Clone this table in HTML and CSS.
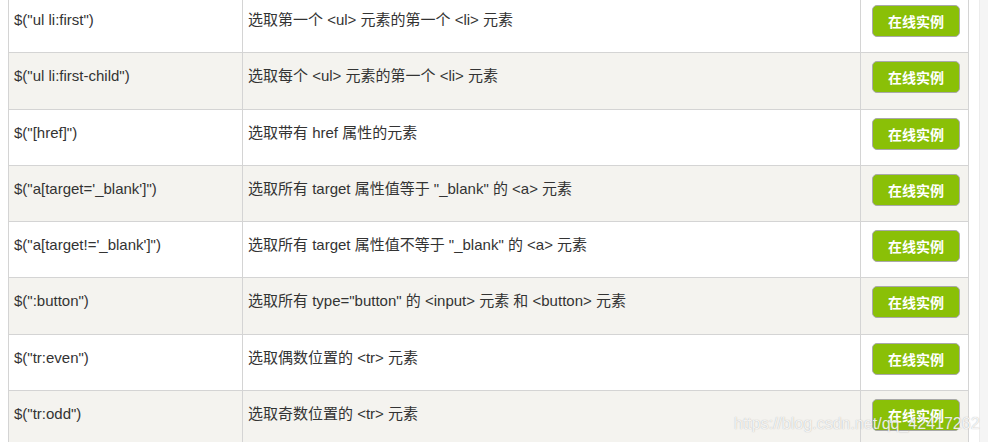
FILE: index.html
```html
<!DOCTYPE html>
<html lang="zh-CN">
<head>
<meta charset="utf-8">
<title>jQuery 选择器</title>
<link rel="stylesheet" href="styles.css">
</head>
<body>
<div class="page">
  <main class="content">
    <table class="reference">
      <colgroup>
        <col class="c-sel">
        <col class="c-desc">
        <col class="c-try">
      </colgroup>
      <tbody>
        <tr><td>$("ul li:first")</td><td>选取第一个 &lt;ul&gt; 元素的第一个 &lt;li&gt; 元素</td><td class="try"><a class="tryit" href="#">在线实例</a></td></tr>
        <tr><td>$("ul li:first-child")</td><td>选取每个 &lt;ul&gt; 元素的第一个 &lt;li&gt; 元素</td><td class="try"><a class="tryit" href="#">在线实例</a></td></tr>
        <tr><td>$("[href]")</td><td>选取带有 href 属性的元素</td><td class="try"><a class="tryit" href="#">在线实例</a></td></tr>
        <tr><td>$("a[target='_blank']")</td><td>选取所有 target 属性值等于 "_blank" 的 &lt;a&gt; 元素</td><td class="try"><a class="tryit" href="#">在线实例</a></td></tr>
        <tr><td>$("a[target!='_blank']")</td><td>选取所有 target 属性值不等于 "_blank" 的 &lt;a&gt; 元素</td><td class="try"><a class="tryit" href="#">在线实例</a></td></tr>
        <tr><td>$(":button")</td><td>选取所有 type="button" 的 &lt;input&gt; 元素 和 &lt;button&gt; 元素</td><td class="try"><a class="tryit" href="#">在线实例</a></td></tr>
        <tr><td>$("tr:even")</td><td>选取偶数位置的 &lt;tr&gt; 元素</td><td class="try"><a class="tryit" href="#">在线实例</a></td></tr>
        <tr><td>$("tr:odd")</td><td>选取奇数位置的 &lt;tr&gt; 元素</td><td class="try"><a class="tryit" href="#">在线实例</a></td></tr>
      </tbody>
    </table>
  </main>
  <aside class="side"></aside>
</div>
<div class="watermark">https://blog.csdn.net/qq_42417262</div>
</body>
</html>
```

FILE: styles.css
```css
html, body {
  margin: 0;
  padding: 0;
  overflow: hidden;
  background: #fff;
}

body {
  font-family: "Liberation Sans", Arial, "Noto Sans CJK SC", sans-serif;
  font-size: 15px;
  color: #333;
  position: relative;
  height: 442px;
}

.page {
  display: flex;
  align-items: flex-start;
}

.content {
  width: 979px;
  padding-left: 8px;
  box-sizing: border-box;
  margin-top: -4px;
}

.side {
  width: 9px;
  height: 442px;
  background: #f5f5f5;
  border-left: 1px solid #ececec;
  box-sizing: border-box;
}

.reference {
  border-collapse: collapse;
  table-layout: fixed;
  width: 960px;
}

.c-sel { width: 234px; }
.c-desc { width: 618px; }
.c-try { width: 108px; }

.reference tr {
  height: 56.25px;
}

.reference tr:nth-child(even) {
  background: #f4f3ef;
}

.reference td {
  border: 1px solid #d4d4d4;
  padding: 8px 5px 0 5px;
  line-height: 30px;
  vertical-align: top;
  white-space: nowrap;
}

.reference td.try {
  padding-left: 11px;
}

.tryit {
  display: block;
  box-sizing: border-box;
  width: 88px;
  height: 32px;
  line-height: 30px;
  text-align: center;
  background: #8ac007;
  border: 1px solid #a9a9a9;
  border-radius: 5px;
  color: #fff;
  font-family: "Noto Sans CJK SC", sans-serif;
  font-size: 14px;
  font-weight: bold;
  text-decoration: none;
}

.watermark {
  position: absolute;
  left: 734px;
  top: 415px;
  font-family: "Liberation Sans", Arial, sans-serif;
  font-size: 16px;
  color: rgba(255, 255, 255, 0.85);
  text-shadow: 0 0 1px rgba(120, 120, 120, 0.6);
  white-space: nowrap;
  pointer-events: none;
}
```
